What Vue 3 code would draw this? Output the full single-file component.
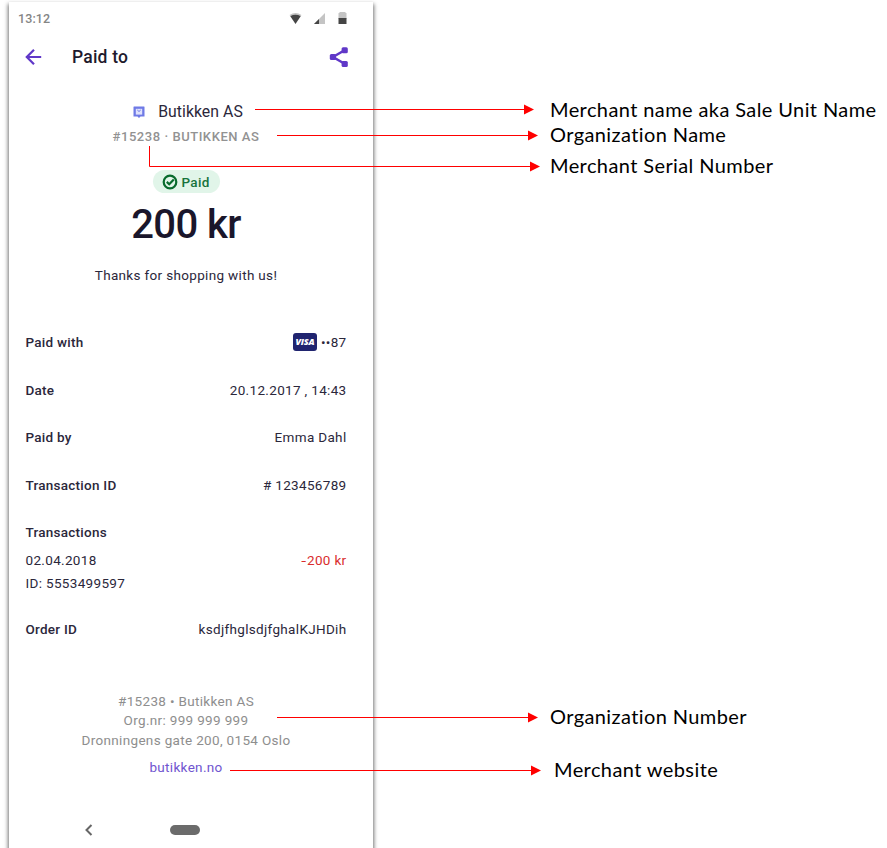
<script setup>
const details = [
  { label: 'Paid with', value: '••87', card: true },
  { label: 'Date', value: '20.12.2017 , 14:43', cls: 'date' },
  { label: 'Paid by', value: 'Emma Dahl' },
  { label: 'Transaction ID', value: '# 123456789' },
]
const arrows = [
  { line: 'M255 109.5H526', x: 534, y: 109.5 },
  { line: 'M277 135.5H529', x: 538, y: 135.5 },
  { line: 'M149.5 146V166.500H531', x: 540, y: 166.5 },
  { line: 'M277 717.5H529', x: 538, y: 717.5 },
  { line: 'M230 770.500H532', x: 541, y: 770.5 },
]
const head = (a) => `M${a.x} ${a.y}l-10 -5v10z`
</script>

<template>
  <div class="page">
    <main class="phone">
      <div class="status">
        <span class="clock">13:12</span>
        <svg width="62" height="14" viewBox="0 0 62 14">
          <path d="M2.500 3Q8.500 -1 14.500 3L12.500 5.500H4.500z" fill="#c4c4c4" />
          <path d="M3.300 4.200Q8.500 1.500 13.700 4.200L8.500 12z" fill="#454545" />
          <path d="M38 1V12H27z" fill="#c4c4c4" />
          <path d="M32 7V12H27z" fill="#454545" />
          <path d="M52.500 0H58.500V1H59.500V7H51.500V1H52.500z" fill="#c4c4c4" />
          <path d="M51.500 6H59.500V12H51.500z" fill="#454545" />
        </svg>
      </div>
      <header class="bar">
        <svg class="back" width="18" height="18" viewBox="0 0 18 18" fill="none" stroke="#6038c8" stroke-width="2.200">
          <path d="M16.200 9H2M9 1.800L1.800 9L9 16.200" />
        </svg>
        <h1>Paid to</h1>
        <svg class="share" width="20" height="22" viewBox="0 0 20 22">
          <path d="M16 4L4 11L16 18" fill="none" stroke="#6038c8" stroke-width="2.500" />
          <g fill="#6038c8">
            <rect x=".8" y="8" width="6.200" height="6" rx="1.500" />
            <rect x="12.600" y="1.200" width="6.200" height="6" rx="1.500" />
            <rect x="12.600" y="15" width="6.200" height="6" rx="1.500" />
          </g>
        </svg>
      </header>

      <section class="summary">
        <div class="merchant">
          <svg width="12" height="13" viewBox="0 0 12 13">
            <path d="M1 .500H11Q11.500 .500 11.500 1V10.500H7.500L6 12L4.500 10.500H.500V1Q.500 .500 1 .500z" fill="#6f7ae6" />
            <rect x="2.800" y="2.800" width="6.400" height="5.800" fill="#dfe2fc" />
            <path d="M4.300 4Q6 7 7.700 4" fill="none" stroke="#6f7ae6" />
          </svg>
          <span>Butikken AS</span>
        </div>
        <div class="org">#15238 · BUTIKKEN AS</div>
        <div class="chip">
          <svg width="16" height="16" viewBox="0 0 16 16" fill="none" stroke="#086b2d">
            <circle cx="8" cy="8" r="6.300" stroke-width="2.200" />
            <path d="M4.800 7.900L7.200 10.200L11.800 5.400" stroke-width="2.200" />
          </svg>
          <span>Paid</span>
        </div>
        <div class="amount">200 kr</div>
        <p class="thanks">Thanks for shopping with us!</p>
      </section>

      <section class="details">
        <div v-for="d in details" :key="d.label" class="row">
          <b>{{ d.label }}</b>
          <span class="value" :class="d.cls"><i v-if="d.card" class="visa">VISA</i>{{ d.value }}</span>
        </div>
        <div class="row heading"><b>Transactions</b></div>
        <div class="row charge"><span>02.04.2018</span><span class="minus"><span class="sign">-</span>200 kr</span></div>
        <div class="row ident"><span>ID: 5553499597</span></div>
        <div class="row order"><b>Order ID</b><span>ksdjfhglsdjfghalKJHDih</span></div>
      </section>

      <footer class="foot">
        <div>#15238 • Butikken AS</div>
        <div>Org.nr: 999 999 999</div>
        <div>Dronningens gate 200, 0154 Oslo</div>
        <a>butikken.no</a>
      </footer>
      <nav class="nav">
        <svg width="10" height="14" viewBox="0 0 10 14" fill="none" stroke="#666" stroke-width="2">
          <path d="M7.500 2L2.500 7L7.500 12" />
        </svg>
        <span class="pill"></span>
      </nav>
    </main>

    <aside class="notes">
      <p class="n1">Merchant name aka Sale Unit Name</p>
      <p class="n2">Organization Name</p>
      <p class="n3">Merchant Serial Number</p>
      <p class="n4">Organization Number</p>
      <p class="n5">Merchant website</p>
    </aside>

    <svg class="arrows" width="887" height="848" viewBox="0 0 887 848">
      <g v-for="a in arrows" :key="a.y">
        <path :d="a.line" fill="none" stroke="#f00" />
        <path :d="head(a)" fill="#f00" />
      </g>
    </svg>
  </div>
</template>

<style>
body { background: #fff; overflow: hidden; }
</style>

<style scoped>
* { box-sizing: border-box; }
p, h1 { margin: 0; }
svg { display: block; flex: none; }
.page {
  position: relative;
  display: flex;
  width: 887px;
  height: 848px;
  overflow: hidden;
  background: #fff;
}
.phone {
  width: 364px;
  height: 860px;
  flex: none;
  margin: 2px 0 0 9px;
  padding: 0 26.500px 0 16.500px;
  background: #fff;
  box-shadow: 0 3px 4px 1px rgba(0, 0, 0, .55);
  font: 13.500px/20px Roboto, sans-serif;
  letter-spacing: .33px;
  color: #2b273b;
}
.status { display: flex; justify-content: space-between; height: 33px; align-items: center; margin: 0 -2.500px 0 -7.500px; }
.clock { color: #858585; font-size: 12.500px; font-weight: 500; letter-spacing: .1px; }
.bar { display: flex; align-items: center; height: 44px; }
.back { margin-left: -1px; margin-right: 29.500px; }
.bar h1 { font-size: 17.500px; font-weight: 500; letter-spacing: .2px; color: #1e1a2d; }
.share { margin-left: auto; margin-right: -2px; }
.summary { display: flex; flex-direction: column; align-items: center; }
.merchant { display: flex; align-items: center; gap: 13px; height: 24px; margin-top: 21px; margin-left: 4px; font-size: 15.800px; letter-spacing: .05px; }
.org { height: 26px; line-height: 25px; font-size: 13px; font-weight: 500; letter-spacing: .54px; color: #929292; }
.chip { display: flex; align-items: center; gap: 4px; width: 67px; height: 23px; margin-top: 20px; padding-left: 9px; border-radius: 12px; background: #e1f5e9; color: #16733c; font-weight: 500; }
.amount { height: 60px; line-height: 64px; font-size: 40px; font-weight: 500; letter-spacing: -.6px; color: #1a162b; }
.thanks { margin-top: 12px; }
.details { margin-top: 33px; }
.row { display: flex; justify-content: space-between; align-items: center; height: 47.700px; }
.row b { font-weight: 500; letter-spacing: .25px; }
.value { display: flex; align-items: center; }
.visa { width: 24px; height: 18px; margin-right: 4px; border-radius: 3px; background: #20246f; color: #fff; font: italic 800 9px/18px "Open Sans", sans-serif; letter-spacing: -.2px; text-align: center; }
.heading { height: 46px; }
.charge { height: 10px; }
.minus { color: #d92d2d; }
.sign { display: inline-block; letter-spacing: 1px; transform: scaleX(1.3); }
.ident { height: 36px; }
.order { height: 56px; }
.foot { display: flex; flex-direction: column; align-items: center; margin-top: 35px; line-height: 19.500px; color: #8e8e8e; }
.foot a { margin-top: 8px; color: #7054cf; }
.nav { display: flex; align-items: center; height: 20px; margin-top: 42.500px; padding-left: 58.500px; }
.pill { width: 30px; height: 10px; margin-left: 76px; border-radius: 5px; background: #6b6b6b; }
.notes { margin: 94px 0 0 177px; font: 20px/30px Lato, sans-serif; letter-spacing: .4px; font-variant-ligatures: none; color: #000; white-space: nowrap; }
.n2 { margin-top: -5px; }
.n3 { margin-top: 1px; }
.n4 { margin-top: 521px; }
.n5 { margin-top: 23px; padding-left: 4px; }
.arrows { position: absolute; left: 0; top: 0; pointer-events: none; }
</style>
